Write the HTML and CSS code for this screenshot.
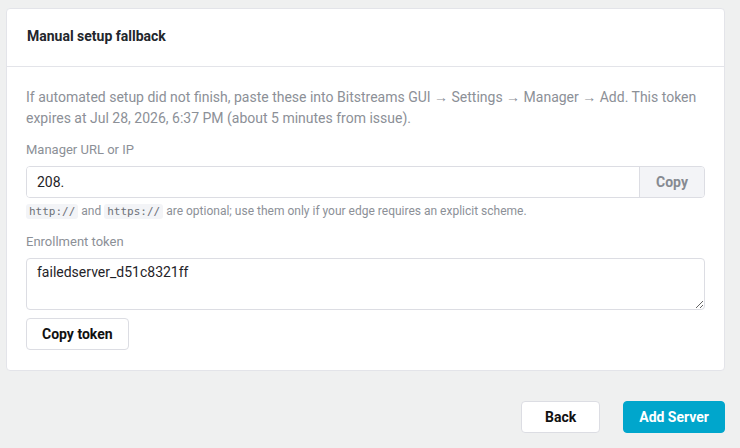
FILE: index.html
```html
<!DOCTYPE html>
<html lang="en">

<head>
  <meta charset="UTF-8">
  <meta name="viewport" content="width=device-width, initial-scale=1.0">
  <title>Add Server</title>
  <link rel="stylesheet" href="styles.css">
</head>

<body>
  <div class="wizard">
    <div class="panel">
      <div class="panel-header">Manual setup fallback</div>
      <div class="panel-body">
        <p class="intro">If automated setup did not finish, paste these into Bitstreams GUI → Settings → Manager → Add. This token expires at Jul 28, 2026, 6:37 PM (about 5 minutes from issue).</p>

        <label class="field-label">Manager URL or IP</label>
        <div class="input-group">
          <input type="text" class="input" value="208.">
          <button class="addon">Copy</button>
        </div>
        <div class="hint"><code>http://</code> and <code>https://</code> are optional; use them only if your edge requires an explicit scheme.</div>

        <label class="field-label">Enrollment token</label>
        <textarea class="textarea">failedserver_d51c8321ff</textarea>
        <button class="btn">Copy token</button>
      </div>
    </div>

    <div class="actions">
      <button class="btn btn-back">Back</button>
      <button class="btn btn-primary">Add Server</button>
    </div>
  </div>
</body>

</html>
```

FILE: styles.css
```css
body {
  margin: 0;
  background-color: #eff0f0;
  font-family: Roboto, "Liberation Sans", sans-serif;
  color: #1f2328;
}

.wizard {
  padding: 8px 15px 0 6px;
}

.panel {
  background: #fff;
  border: 1px solid #e3e4e9;
  border-radius: 4px;
}

.panel-header {
  height: 58px;
  box-sizing: border-box;
  padding: 19px 20px 0;
  font-size: 14px;
  font-weight: bold;
  color: #22262c;
  border-bottom: 1px solid #e3e4e9;
}

.panel-body {
  padding: 20px 19px 20px;
}

.intro {
  margin: 0 0 12px;
  font-size: 14px;
  line-height: 21px;
  color: #8c9097;
}

.field-label {
  display: block;
  font-size: 13px;
  line-height: 18px;
  color: #8c9097;
  margin-bottom: 7px;
}

.input-group {
  display: flex;
  height: 32px;
  border: 1px solid #dcdde3;
  border-radius: 4px;
  box-sizing: border-box;
  overflow: hidden;
}

.input {
  flex: 1;
  border: 0;
  padding: 0 10px;
  font-family: inherit;
  font-size: 14px;
  color: #1f2328;
  outline: none;
}

.addon {
  width: 65px;
  border: 0;
  border-left: 1px solid #dcdde3;
  background: #f3f4f7;
  font-family: inherit;
  font-size: 14px;
  font-weight: bold;
  color: #868a91;
}

.hint {
  margin: 5px 0 14px;
  font-size: 12px;
  line-height: 16px;
  color: #8c9097;
}

.hint code {
  font-family: "DejaVu Sans Mono", monospace;
  font-size: 11px;
  line-height: 1;
  background: #f3f4f7;
  padding: 1px 3px;
  border-radius: 3px;
  color: #6d7178;
}

.textarea {
  display: block;
  width: 100%;
  height: 52px;
  box-sizing: border-box;
  border: 1px solid #dcdde3;
  border-radius: 4px;
  padding: 3px 10px;
  font-family: inherit;
  font-size: 14px;
  line-height: 20px;
  color: #1f2328;
  resize: vertical;
  margin-bottom: 8px;
}

.btn {
  height: 32px;
  padding: 0 15px;
  background: #fff;
  border: 1px solid #dcdde3;
  border-radius: 4px;
  font-family: inherit;
  font-size: 14px;
  font-weight: bold;
  color: #111;
}

.actions {
  display: flex;
  justify-content: flex-end;
  gap: 23px;
  margin-top: 30px;
}

.btn-back {
  min-width: 79px;
}

.btn-primary {
  background: #00a6cc;
  border-color: #00a6cc;
  color: #fff;
  min-width: 101px;
}
```
